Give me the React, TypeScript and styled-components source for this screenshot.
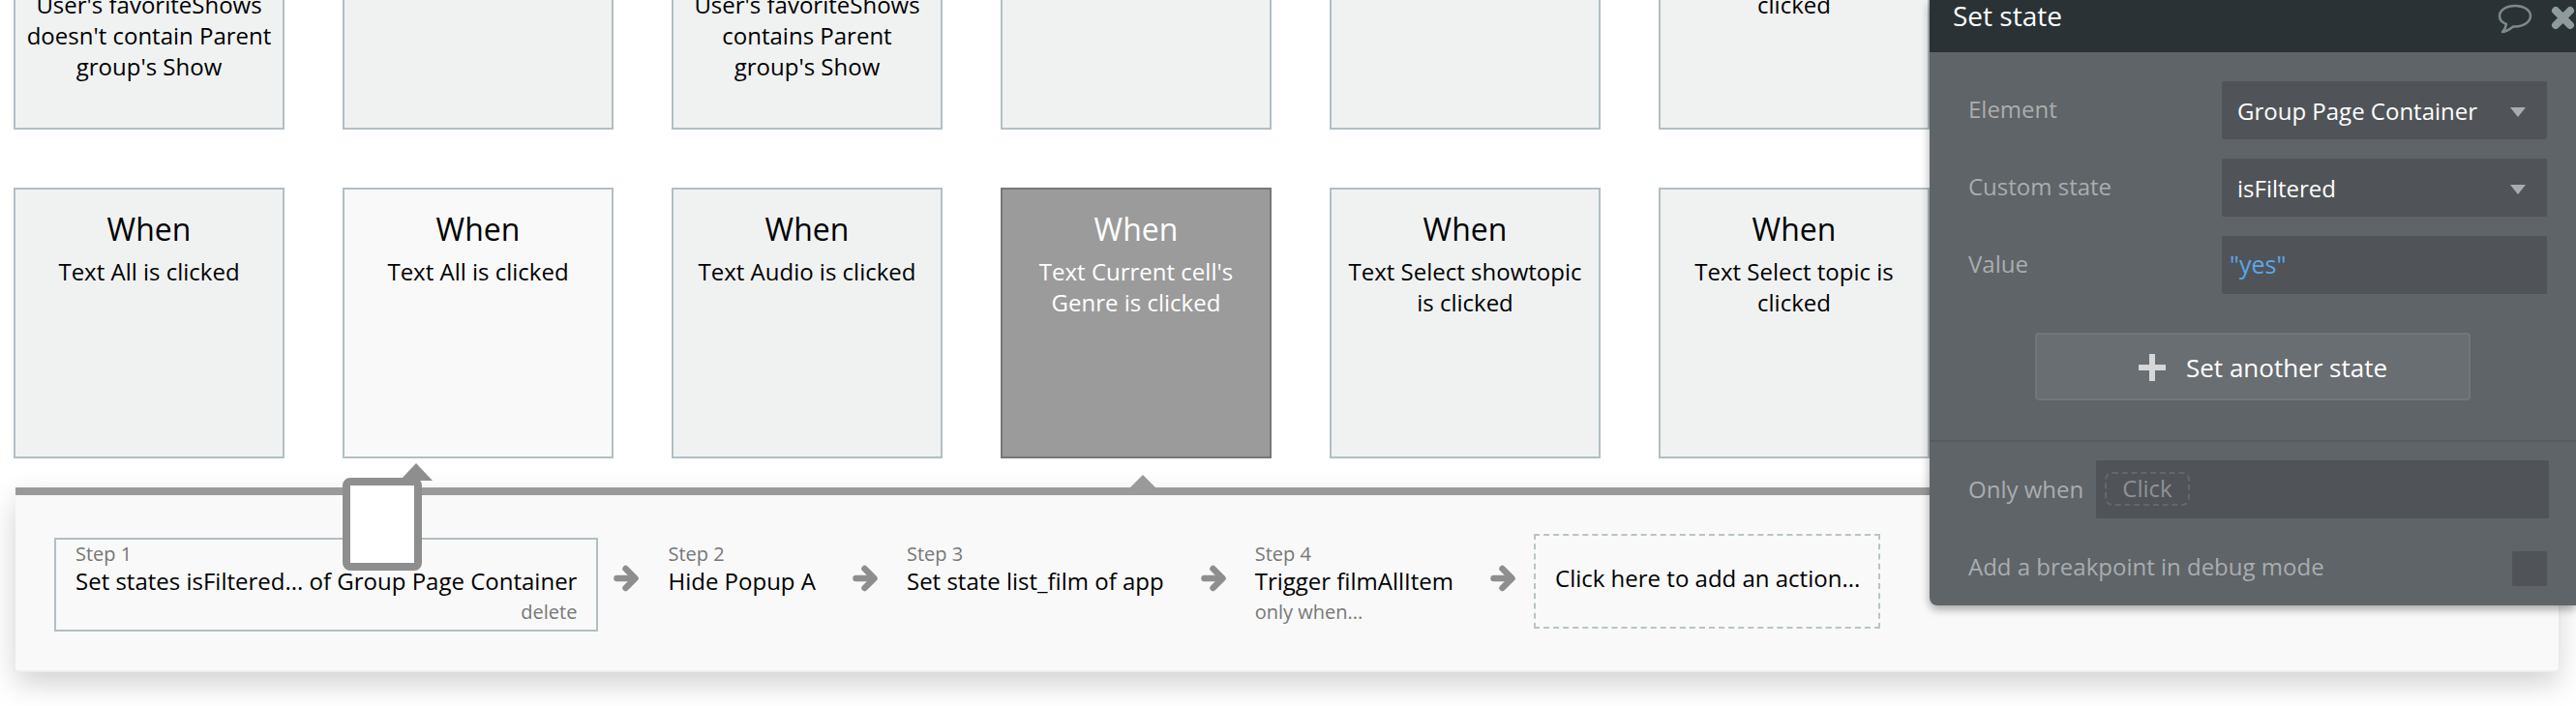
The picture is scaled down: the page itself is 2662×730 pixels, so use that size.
import React from 'react'
import styled, { createGlobalStyle } from 'styled-components'

const GlobalStyle = createGlobalStyle`
  html, body {
    margin: 0;
    padding: 0;
    background: #fff;
    overflow: hidden;
  }
  * {
    box-sizing: border-box;
  }
`

const Page = styled.div`
  position: relative;
  width: 2662px;
  height: 730px;
  overflow: hidden;
  font-family: 'Open Sans', 'Noto Sans', sans-serif;
  color: #000;
`

const CardRow = styled.div<{ $top?: boolean }>`
  display: flex;
  gap: 60px;
  padding-left: 14px;
  margin-bottom: ${(p) => (p.$top ? '60px' : '30px')};
`

const Card = styled.div<{ $tone?: 'light' | 'selected'; $cut?: boolean }>`
  flex: 0 0 280px;
  height: ${(p) => (p.$cut ? '134px' : '280px')};
  padding: 0 10px;
  text-align: center;
  border: 2px solid ${(p) => (p.$tone === 'selected' ? '#777' : '#b1bfc3')};
  border-top-width: ${(p) => (p.$cut ? '0' : '2px')};
  background: ${(p) =>
    p.$tone === 'selected' ? '#9b9b9b' : p.$tone === 'light' ? '#f9f9f9' : '#f0f2f2'};
  color: ${(p) => (p.$tone === 'selected' ? '#fff' : '#000')};
`

const CardTitle = styled.div`
  margin-top: 19px;
  font-size: 32px;
  line-height: 44px;
`

const CardText = styled.div<{ $cut?: boolean }>`
  margin-top: ${(p) => (p.$cut ? '-11px' : '6px')};
  font-size: 24px;
  line-height: 32px;
`

const Workflow = styled.div`
  position: relative;
  margin: 0 18px 0 16px;
  height: 191px;
  background: #f9f9f9;
  border-top: 8px solid #9a9a9a;
  border-bottom: 2px solid #efefef;
  border-radius: 0 0 4px 4px;
  box-shadow: 0 12px 30px rgba(0, 0, 0, 0.18);
`

const CardPointer = styled.div`
  position: absolute;
  left: 1151px;
  top: -21px;
  width: 0;
  height: 0;
  border-left: 14px solid transparent;
  border-right: 14px solid transparent;
  border-bottom: 14px solid #9a9a9a;
`

const Steps = styled.div`
  display: flex;
  align-items: flex-start;
  padding: 44px 0 0 40px;
`

const Step = styled.div<{ $active?: boolean }>`
  height: 97px;
  padding: 0 20px;
  border: 2px solid ${(p) => (p.$active ? '#b1bfc3' : 'transparent')};
  white-space: nowrap;
`

const StepLabel = styled.div`
  font-size: 20px;
  line-height: 29px;
  color: #777;
`

const StepName = styled.div`
  font-size: 24px;
  line-height: 28px;
`

const StepNote = styled.div<{ $right?: boolean }>`
  font-size: 20px;
  line-height: 35px;
  color: #777;
  text-align: ${(p) => (p.$right ? 'right' : 'left')};
`

const ArrowIcon = styled.svg`
  flex: 0 0 26px;
  width: 26px;
  height: 28px;
  margin: 28px 8px 0 16px;
`

const AddAction = styled.div`
  width: 358px;
  height: 98px;
  margin: -4px 0 0 11px;
  padding: 28px 20px 0 20px;
  border: 2px dashed #b8c4c6;
  font-size: 24px;
  line-height: 32px;
  white-space: nowrap;
`

const DragHandle = styled.div`
  position: absolute;
  left: 354px;
  top: 494px;
  width: 82px;
  height: 96px;
  background: #fff;
  border: 8px solid #8e8e8e;
  border-radius: 8px;
`

const DragTip = styled.div`
  position: absolute;
  left: 413px;
  top: 479px;
  width: 0;
  height: 0;
  border-left: 17px solid transparent;
  border-right: 17px solid transparent;
  border-bottom: 18px solid #8e8e8e;
`

const Editor = styled.div`
  position: absolute;
  top: 0;
  left: 1994px;
  width: 668px;
  height: 626px;
  display: flex;
  flex-direction: column;
  background: #5f6468;
  border-radius: 0 0 0 8px;
  box-shadow: 0 4px 10px rgba(0, 0, 0, 0.35);
`

const EditorHeader = styled.div`
  position: relative;
  flex: 0 0 54px;
  padding-left: 24px;
  background: #2a3235;
  color: #fff;
  font-size: 28px;
  line-height: 32px;
`

const HeaderIcon = styled.svg`
  position: absolute;
  top: 0;
`

const EditorBody = styled.div`
  display: flex;
  flex-direction: column;
  gap: 20px;
  padding: 30px 30px 0 40px;
`

const FieldRow = styled.div`
  display: flex;
  align-items: center;
  justify-content: space-between;
`

const FieldLabel = styled.div<{ $lift?: number }>`
  margin-top: ${(p) => (p.$lift ? `-${p.$lift}px` : '0')};
  font-size: 24px;
  line-height: 32px;
  color: #a9adaf;
  white-space: nowrap;
`

const Field = styled.div`
  position: relative;
  width: 336px;
  height: 60px;
  padding-left: 16px;
  border-radius: 2px;
  background: #505458;
  color: #fff;
  font-size: 24px;
  line-height: 61px;
`

const ValueField = styled(Field)`
  padding-left: 8px;
  font-size: 25px;
  line-height: 58px;
  color: #5aa7e8;
`

const Caret = styled.span`
  position: absolute;
  right: 22px;
  top: 27px;
  width: 0;
  height: 0;
  border-left: 8px solid transparent;
  border-right: 8px solid transparent;
  border-top: 10px solid #a9adaf;
`

const AddButton = styled.div`
  display: flex;
  align-items: center;
  align-self: center;
  width: 450px;
  height: 70px;
  margin: 20px 0 41px -10px;
  padding: 2px 0 0 105px;
  gap: 21px;
  background: #696e72;
  border: 2px solid #70767a;
  border-radius: 4px;
  color: #fff;
  font-size: 26px;
`

const PlusIcon = styled.svg`
  width: 28px;
  height: 28px;
`

const Divider = styled.div`
  height: 2px;
  background: #565b5f;
`

const ConditionBody = styled.div`
  display: flex;
  flex-direction: column;
  gap: 34px;
  padding: 19px 30px 0 40px;
`

const ConditionRow = styled.div`
  display: flex;
  align-items: center;
  justify-content: space-between;
`

const ConditionField = styled.div`
  width: 468px;
  height: 60px;
  margin-right: -2px;
  padding: 12px 0 0 9px;
  border-radius: 2px;
  background: #505458;
`

const ClickChip = styled.div`
  width: 88px;
  height: 35px;
  border: 2px dashed #63686b;
  border-radius: 8px;
  color: #8e9295;
  font-size: 24px;
  line-height: 30px;
  text-align: center;
`

const CheckBox = styled.div`
  width: 36px;
  height: 36px;
  border-radius: 2px;
  background: #505458;
`

const Arrow = () => (
  <ArrowIcon viewBox="0 0 26 28" fill="none" stroke="#8e8e8e" strokeWidth="6.5" strokeLinecap="round" strokeLinejoin="round">
    <path d="M3.5 14H21" />
    <path d="M12.5 4L22.5 14L12.5 24" />
  </ArrowIcon>
)

export default function App() {
  return (
    <Page>
      <GlobalStyle />
      <CardRow $top>
        <Card $cut>
          <CardText $cut>User's favoriteShows doesn't contain Parent group's Show</CardText>
        </Card>
        <Card $cut />
        <Card $cut>
          <CardText $cut>User's favoriteShows contains Parent group's Show</CardText>
        </Card>
        <Card $cut />
        <Card $cut />
        <Card $cut>
          <CardText $cut>clicked</CardText>
        </Card>
      </CardRow>
      <CardRow>
        <Card>
          <CardTitle>When</CardTitle>
          <CardText>Text All is clicked</CardText>
        </Card>
        <Card $tone="light">
          <CardTitle>When</CardTitle>
          <CardText>Text All is clicked</CardText>
        </Card>
        <Card>
          <CardTitle>When</CardTitle>
          <CardText>Text Audio is clicked</CardText>
        </Card>
        <Card $tone="selected">
          <CardTitle>When</CardTitle>
          <CardText>Text Current cell's Genre is clicked</CardText>
        </Card>
        <Card>
          <CardTitle>When</CardTitle>
          <CardText>Text Select showtopic is clicked</CardText>
        </Card>
        <Card>
          <CardTitle>When</CardTitle>
          <CardText>Text Select topic is clicked</CardText>
        </Card>
      </CardRow>

      <Workflow>
        <CardPointer />
        <Steps>
          <Step $active>
            <StepLabel>Step 1</StepLabel>
            <StepName>Set states isFiltered... of Group Page Container</StepName>
            <StepNote $right>delete</StepNote>
          </Step>
          <Arrow />
          <Step>
            <StepLabel>Step 2</StepLabel>
            <StepName>Hide Popup A</StepName>
          </Step>
          <Arrow />
          <Step>
            <StepLabel>Step 3</StepLabel>
            <StepName>Set state list_film of app</StepName>
          </Step>
          <Arrow />
          <Step>
            <StepLabel>Step 4</StepLabel>
            <StepName>Trigger filmAllItem</StepName>
            <StepNote>only when...</StepNote>
          </Step>
          <Arrow />
          <AddAction>Click here to add an action...</AddAction>
        </Steps>
      </Workflow>

      <DragTip />
      <DragHandle />

      <Editor>
        <EditorHeader>
          Set state
          <HeaderIcon style={{ left: 587 }} width="36" height="36" viewBox="0 0 36 36" fill="none">
            <path
              d="M18 6C9 6 2 10.500 2 16.500C2 20.500 5 23.500 9 25C8.500 28 6.500 31.500 5 33C9 32.500 13 30 16 27.500C17 27.500 17.500 27.500 18 27.500C27 27.500 34 22.500 34 16.500C34 10.500 27 6 18 6Z"
              stroke="#7c888a"
              strokeWidth="2.500"
              strokeLinejoin="round"
            />
          </HeaderIcon>
          <HeaderIcon style={{ left: 642 }} width="26" height="36" viewBox="0 0 26 36" fill="none">
            <path d="M5 11L20 26M20 11L5 26" stroke="#8e9a9c" strokeWidth="8" strokeLinecap="round" />
          </HeaderIcon>
        </EditorHeader>
        <EditorBody>
          <FieldRow>
            <FieldLabel $lift={2}>Element</FieldLabel>
            <Field>
              Group Page Container
              <Caret />
            </Field>
          </FieldRow>
          <FieldRow>
            <FieldLabel $lift={2}>Custom state</FieldLabel>
            <Field>
              isFiltered
              <Caret />
            </Field>
          </FieldRow>
          <FieldRow>
            <FieldLabel $lift={2}>Value</FieldLabel>
            <ValueField>"yes"</ValueField>
          </FieldRow>
          <AddButton>
            <PlusIcon viewBox="0 0 28 28">
              <path d="M11 0H17V11H28V17H17V28H11V17H0V11H11Z" fill="#d5d7d8" />
            </PlusIcon>
            Set another state
          </AddButton>
        </EditorBody>
        <Divider />
        <ConditionBody>
          <ConditionRow>
            <FieldLabel>Only when</FieldLabel>
            <ConditionField>
              <ClickChip>Click</ClickChip>
            </ConditionField>
          </ConditionRow>
          <ConditionRow>
            <FieldLabel $lift={5}>Add a breakpoint in debug mode</FieldLabel>
            <CheckBox />
          </ConditionRow>
        </ConditionBody>
      </Editor>
    </Page>
  )
}
